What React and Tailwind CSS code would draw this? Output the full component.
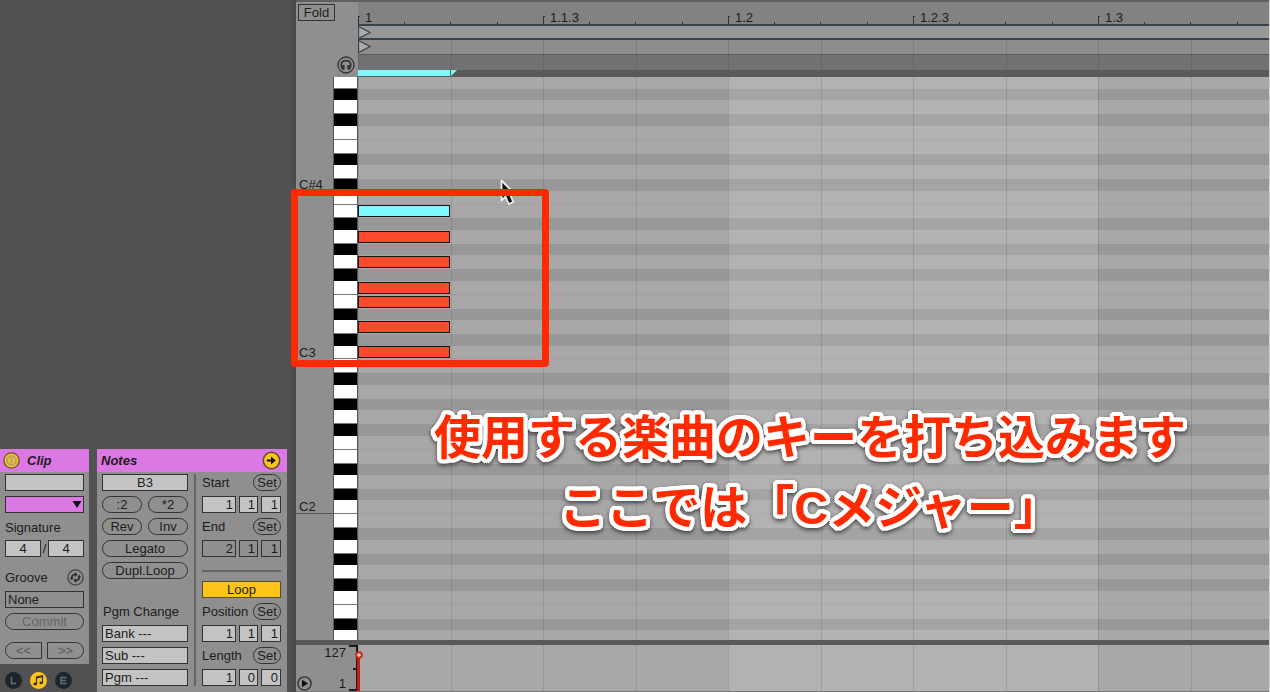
import { clsx } from 'clsx'

const NOTES = ['A4', 'G#4', 'G4', 'F#4', 'F4', 'E4', 'D#4', 'D4', 'C#4', 'C4']
  .concat(['B3', 'A#3', 'A3', 'G#3', 'G3', 'F#3', 'F3', 'E3', 'D#3', 'D3', 'C#3', 'C3'])
  .concat(['B2', 'A#2', 'A2', 'G#2', 'G2', 'F#2', 'F2', 'E2', 'D#2', 'D2', 'C#2', 'C2'])
  .concat(['B1', 'A#1', 'A1', 'G#1', 'G1', 'F#1', 'F1', 'E1', 'D#1', 'D1'])

const PLAYED = ['B3', 'A3', 'G3', 'F3', 'E3', 'D3', 'C3']
const LABELS = ['C#4', 'C3', 'C2']
const RULER = ['1', '1.1.3', '1.2', '1.2.3', '1.3']

const Pill = ({ children, className }) => (
  <button
    type="button"
    className={clsx('flex h-[17px] items-center justify-center rounded-full border border-[#333] text-[13px] leading-none', className)}
  >
    {children}
  </button>
)

const Field = ({ label, value, className }) => (
  <input
    aria-label={label}
    defaultValue={value}
    className={clsx('h-[17px] min-w-0 rounded-none border border-[#333] px-[2px] text-[13px] leading-none outline-none', className)}
  />
)

const Triple = ({ label, values, className }) => (
  <div className={clsx('grid grid-cols-[34px_19px_20px] gap-[3px]', className)}>
    {values.map((v, i) => (
      <Field key={i} label={`${label} ${i + 1}`} value={v} className="w-full text-right" />
    ))}
  </div>
)

const SetRow = ({ label }) => (
  <div className="flex h-[17px] items-center justify-between">
    <span>{label}</span>
    <Pill className="w-7">Set</Pill>
  </div>
)

const ClipPanel = () => (
  <section className="w-[89px] bg-[#8f8f8f] pb-[5px]">
    <header className="flex h-[23px] items-center gap-[7px] bg-[#dc78e4] pl-[3px]">
      <svg width="17" height="17" viewBox="0 0 17 17">
        <circle cx="8.5" cy="8.5" r="7.6" fill="#fcc419" stroke="#6b5a35" strokeWidth="1.4" />
        <circle cx="8.5" cy="8.5" r="4.4" fill="#fcc419" stroke="#a8a088" strokeWidth="1.8" />
        <path d="M8.5 5.8v5.4" stroke="#a8a088" strokeWidth="2" />
      </svg>
      <h2 className="text-[13px] font-bold italic">Clip</h2>
    </header>
    <div className="flex flex-col gap-[5px] px-[5px] pt-[2px]">
      <Field label="Clip name" value="" className="w-full bg-[#c3c3c3]" />
      <div className="relative flex">
        <select aria-label="Clip color" className="h-[17px] w-full appearance-none border border-[#333] bg-[#dc78e4]" />
        <svg className="pointer-events-none absolute top-1 right-[2px]" width="10" height="9" viewBox="0 0 10 9">
          <path d="M0.5 1h9L5 8z" fill="#111" />
        </svg>
      </div>
      <span className="flex h-[17px] items-center pt-[2px]">Signature</span>
      <div className="flex items-center justify-between">
        <Field label="Numerator" value="4" className="w-9 bg-[#c3c3c3] text-center" />
        <span>/</span>
        <Field label="Denominator" value="4" className="w-9 bg-[#c3c3c3] text-center" />
      </div>
      <div className="mt-[7px] flex h-[17px] items-center justify-between">
        <span>Groove</span>
        <button type="button" aria-label="Hot-swap groove">
          <svg width="17" height="17" viewBox="0 0 17 17" fill="none" stroke="#2b2b2b">
            <circle cx="8.5" cy="8.5" r="7.6" stroke="#444" strokeWidth="1.3" />
            <path d="M4.8 9.500V8.500Q4.800 5.500 8 5.500M12.200 7.500v1Q12.200 11.500 9 11.500" strokeWidth="1.600" />
            <path d="M7.800 3v5L10.600 5.500zM9.200 9v5L6.400 11.500zM2.800 8.800h4L4.800 11.200zM10.200 8.200h4L12.200 5.800z" fill="#2b2b2b" stroke="none" />
          </svg>
        </button>
      </div>
      <Field label="Groove" value="None" className="w-full" />
      <Pill className="w-full text-[#666]">Commit</Pill>
      <div className="mt-[7px] flex justify-between text-[#5a5a5a]">
        <button type="button" className="flex h-[17px] w-[37px] items-center justify-center rounded-l-full border border-[#333] text-[13px] leading-none">
          &lt;&lt;
        </button>
        <button type="button" className="flex h-[17px] w-[37px] items-center justify-center rounded-r-full border border-[#333] text-[13px] leading-none">
          &gt;&gt;
        </button>
      </div>
    </div>
  </section>
)

const BoxTabs = () => (
  <div className="flex gap-2 px-[5px] pt-2 pb-[3px]">
    <button type="button" aria-label="Launch box">
      <svg width="17" height="17" viewBox="0 0 17 17">
        <circle cx="8.500" cy="8.500" r="8.500" fill="#1e252b" />
        <path d="M6.500 5v6.500h4.500" fill="none" stroke="#6b7075" strokeWidth="1.400" />
      </svg>
    </button>
    <button type="button" aria-label="Notes box">
      <svg width="17" height="17" viewBox="0 0 17 17">
        <circle cx="8.500" cy="8.500" r="8.500" fill="#fcc419" />
        <path d="M6.500 12V5l6-1.300v7" fill="none" stroke="#3b3214" strokeWidth="1.200" />
        <path d="M6.500 5.800l6-1.300" stroke="#3b3214" strokeWidth="1.500" />
        <ellipse cx="5.200" cy="12" rx="1.800" ry="1.400" fill="#3b3214" />
        <ellipse cx="11.200" cy="10.800" rx="1.800" ry="1.400" fill="#3b3214" />
      </svg>
    </button>
    <button type="button" aria-label="Envelopes box">
      <svg width="17" height="17" viewBox="0 0 17 17">
        <circle cx="8.500" cy="8.500" r="8.500" fill="#1e252b" />
        <path d="M11.500 5.500H6v6h5.500M6 8.500h5" fill="none" stroke="#6b7075" strokeWidth="1.400" />
      </svg>
    </button>
  </div>
)

const NotesPanel = () => (
  <section className="flex w-[190px] flex-col bg-[#8f8f8f]">
    <header className="flex h-[23px] items-center justify-between bg-[#dc78e4] pr-[6px] pl-1">
      <h2 className="text-[13px] font-bold italic">Notes</h2>
      <svg width="19" height="19" viewBox="0 0 19 19">
        <circle cx="9.500" cy="9.500" r="8.200" fill="#fcc419" stroke="#5c4a2c" strokeWidth="1.500" />
        <path d="M4.800 9.500h6" stroke="#111" strokeWidth="2" />
        <path d="M9 5.500v8l4.800-4z" fill="#111" />
      </svg>
    </header>
    <div className="flex flex-1 gap-[6px] pt-[2px] pr-[6px] pb-[6px] pl-[5px]">
      <div className="flex w-[86px] flex-col justify-between">
        <div className="flex flex-col gap-[5px]">
          <Field label="Note" value="B3" className="w-full bg-[#c3c3c3] text-center" />
          <div className="flex justify-between">
            <Pill className="w-10">:2</Pill>
            <Pill className="w-10">*2</Pill>
          </div>
          <div className="flex justify-between">
            <Pill className="w-10">Rev</Pill>
            <Pill className="w-10">Inv</Pill>
          </div>
          <Pill>Legato</Pill>
          <Pill>Dupl.Loop</Pill>
        </div>
        <div className="flex flex-col gap-[5px]">
          <span className="flex h-[17px] items-center pl-px whitespace-nowrap">Pgm Change</span>
          <Field label="Bank" value="Bank ---" className="w-full bg-[#c3c3c3]" />
          <Field label="Sub" value="Sub ---" className="w-full bg-[#c3c3c3]" />
          <Field label="Program" value="Pgm ---" className="w-full bg-[#c3c3c3]" />
        </div>
      </div>
      <div className="w-[2px] bg-[#666]" />
      <div className="flex flex-1 flex-col justify-between">
        <div className="flex flex-col gap-[5px]">
          <SetRow label="Start" />
          <Triple label="Start" values={[1, 1, 1]} className="*:bg-[#c3c3c3]" />
          <SetRow label="End" />
          <Triple label="End" values={[2, 1, 1]} />
        </div>
        <div className="mt-1 h-[2px] bg-[#666]" />
        <div className="flex flex-col gap-[5px]">
          <button type="button" className="flex h-[17px] items-center justify-center border border-[#5c4a2c] bg-[#fcc419] text-[13px] leading-none">
            Loop
          </button>
          <SetRow label="Position" />
          <Triple label="Position" values={[1, 1, 1]} className="*:bg-[#c3c3c3]" />
          <SetRow label="Length" />
          <Triple label="Length" values={[1, 0, 0]} className="*:bg-[#c3c3c3]" />
        </div>
      </div>
    </div>
  </section>
)

// two eighth notes per cell, the second beat is tinted
const GridLines = ({ tinted }) => (
  <div className="pointer-events-none absolute inset-0 flex overflow-hidden">
    {RULER.map((mark, i) => (
      <div
        key={mark}
        className={clsx(
          'grid w-[185px] shrink-0 grid-cols-2 *:border-l *:border-black/10',
          tinted && (i === 2 || i === 3) && 'bg-white/12'
        )}
      >
        <div />
        <div />
      </div>
    ))}
  </div>
)

const Timeline = () => (
  <div className="flex border-t-2 border-[#606060]">
    <div className="flex w-[62px] flex-col items-start justify-between bg-[#8f8f8f] pt-[2px] pb-[3px] pl-[2px]">
      <button type="button" className="flex h-[17px] w-[37px] items-center justify-center border border-[#333] text-[13px] leading-none">
        Fold
      </button>
      <button type="button" aria-label="Preview" className="mr-[3px] self-end">
        <svg width="18" height="18" viewBox="0 0 18 18" fill="none" stroke="#333">
          <circle cx="9" cy="9" r="8" strokeWidth="1.300" />
          <path d="M6.300 13.500Q4.200 11.500 4.200 8.800Q4.500 4.600 9 4.600T13.800 8.800Q13.800 11.500 11.700 13.500" strokeWidth="1.700" />
          <path d="M6.400 9v4.600M11.600 9v4.600" strokeWidth="2.400" />
        </svg>
      </button>
    </div>
    <div className="min-w-0 flex-1">
      <div className="flex h-6 overflow-hidden border-b-2 border-[#3a424b] bg-[#828282]">
        {RULER.map((mark) => (
          <div key={mark} className="flex w-[185px] shrink-0 items-end">
            <div className="h-2 w-[2px] border-t border-l border-[#333]" />
            <div className="w-11 pl-[5px] text-[13px] leading-[12px]">{mark}</div>
            <div className="grid h-[2px] flex-1 grid-cols-3 *:border-l *:border-[#333]">
              <i />
              <i />
              <i />
            </div>
          </div>
        ))}
      </div>
      <div className="flex h-[14px] border-b-2 border-[#3a424b] bg-[#979797]">
        <LoopArrow />
      </div>
      <div className="relative">
        <div className="flex h-[15px] border-b border-[#5c5c5c] bg-[#8d8d8d]">
          <LoopArrow />
        </div>
        <div className="h-[15px] bg-[#727272]" />
        <GridLines />
      </div>
      <div className="flex h-[7px] gap-px bg-[#5a5a5a] pb-px">
        <div className="w-[92px] bg-[#7ffbff]" />
        <svg width="6" height="6" viewBox="0 0 6 6">
          <path d="M0 0h6L0 6z" fill="#7ffbff" />
        </svg>
      </div>
    </div>
  </div>
)

const LoopArrow = () => (
  <svg width="13" height="13" viewBox="0 0 13 13" className="shrink-0">
    <path d="M0.500 0.500L12 6.500L0.500 12.500z" fill="#aaa" stroke="#3a424b" strokeWidth="1.200" />
  </svg>
)

const PianoRoll = () => (
  <div className="relative min-h-0 flex-1 overflow-hidden">
    <div className="relative -mt-[2px] flex h-[569px] flex-col">
      {NOTES.map((note) => {
        const black = note.includes('#')
        const joined = note[0] === 'F' || note[0] === 'C'
        return (
          <div key={note} className={clsx('flex min-h-0 basis-0', black ? 'grow-[23]' : 'grow-[28]')}>
            <div className={clsx('flex w-[37px] items-center bg-[#8f8f8f] pl-[3px] text-[13px] leading-none', note === 'C2' && 'border-b border-[#555]')}>
              {LABELS.includes(note) && note}
            </div>
            <div className={clsx('w-[25px] border-r border-l border-r-[#4c5560] border-l-[#555]', black ? 'bg-black' : 'border-b border-b-[#777] bg-white')} />
            <div
              className={clsx(
                'flex flex-1 items-end',
                black ? 'bg-[#989898]' : 'bg-[#a9a7a7] pb-px',
                !black && joined && 'shadow-[inset_0_-1px_#a2a0a0]'
              )}
            >
              {PLAYED.includes(note) && (
                <div className={clsx('z-10 h-3 w-[92px] border border-[#1d1515]', note === 'B3' ? 'bg-[#7ffbff]' : 'bg-[#fb4a2c]')} />
              )}
            </div>
          </div>
        )
      })}
    </div>
    <div className="absolute inset-y-0 right-0 left-[62px]">
      <GridLines tinted />
    </div>
  </div>
)

const Velocity = () => (
  <div className="flex h-[52px] border-t-[5px] border-b border-t-[#5a5a5a] border-b-[#777]">
    <div className="flex w-[62px] justify-between bg-[#8f8f8f] pl-px">
      <button type="button" aria-label="Play lane" className="self-end">
        <svg width="15" height="15" viewBox="0 0 15 15">
          <circle cx="7.500" cy="7.500" r="6.600" fill="none" stroke="#333" strokeWidth="1.400" />
          <path d="M5 3.800v7.400l6-3.700z" fill="#111" />
        </svg>
      </button>
      <div className="flex gap-[2px]">
        <div className="flex flex-col justify-between text-right text-[13px] leading-[15px]">
          <span>127</span>
          <span>1</span>
        </div>
        <svg width="10" height="46" viewBox="0 0 10 46">
          <path d="M1 1h8v44H1M5 24h4" fill="none" stroke="#1b1b1b" strokeWidth="2" />
        </svg>
      </div>
    </div>
    <div className="relative flex-1 bg-[#a9a7a7]">
      <GridLines tinted />
      <svg className="absolute top-[6px] -left-1" width="9" height="40" viewBox="0 0 9 40">
        <path d="M4.500 4v36" stroke="#c02010" strokeWidth="3" />
        <circle cx="5" cy="4" r="2.800" fill="#ddd" stroke="#d02a14" strokeWidth="2" />
      </svg>
    </div>
  </div>
)

const Annotations = () => (
  <>
    <svg className="absolute top-[179px] left-[500px] z-20" width="18" height="28" viewBox="0 0 18 28">
      <path d="M1.500 1.500v20l4-3.800 3.200 7.300 4.600-2-3.200-7.200h5.400z" fill="#111" stroke="#eee" strokeWidth="1.800" strokeLinejoin="round" />
    </svg>
    <div className="absolute top-[189px] left-[291px] z-20 h-[178px] w-[258px] rounded-[4px] border-[7px] border-[#ff2a00]" />
    <p
      lang="ja"
      className="absolute top-[403px] left-[434px] z-20 text-center font-['Liberation_Sans','Noto_Sans_CJK_JP',sans-serif] text-[47px] leading-[70px] font-bold whitespace-nowrap text-[#ff2a00] drop-shadow-[0_2px_2px_rgba(0,0,0,0.6)] [text-shadow:4px_0_#fff,-4px_0_#fff,0_4px_#fff,0_-4px_#fff,3px_3px_#fff,-3px_3px_#fff,3px_-3px_#fff,-3px_-3px_#fff,4px_2px_#fff,-4px_2px_#fff,4px_-2px_#fff,-4px_-2px_#fff,2px_4px_#fff,-2px_4px_#fff,2px_-4px_#fff,-2px_-4px_#fff,2px_0_#fff,-2px_0_#fff]"
    >
      使用する楽曲のキーを打ち込みます
      <br />
      ここでは「Cメジャー」
    </p>
  </>
)

export default function App() {
  return (
    <div className="relative flex h-screen overflow-hidden bg-[#515151] font-['Liberation_Sans',Arial,sans-serif] text-[13px] leading-none text-[#1c1c1c]">
      <aside className="flex w-[296px] shrink-0 flex-col justify-end border-r-4 border-[#4b4b4b]">
        <div className="flex gap-2">
          <div>
            <ClipPanel />
            <BoxTabs />
          </div>
          <NotesPanel />
        </div>
      </aside>
      <main className="flex min-w-0 flex-1 flex-col border-r border-[#d0d0d0]">
        <Timeline />
        <PianoRoll />
        <Velocity />
      </main>
      <Annotations />
    </div>
  )
}
